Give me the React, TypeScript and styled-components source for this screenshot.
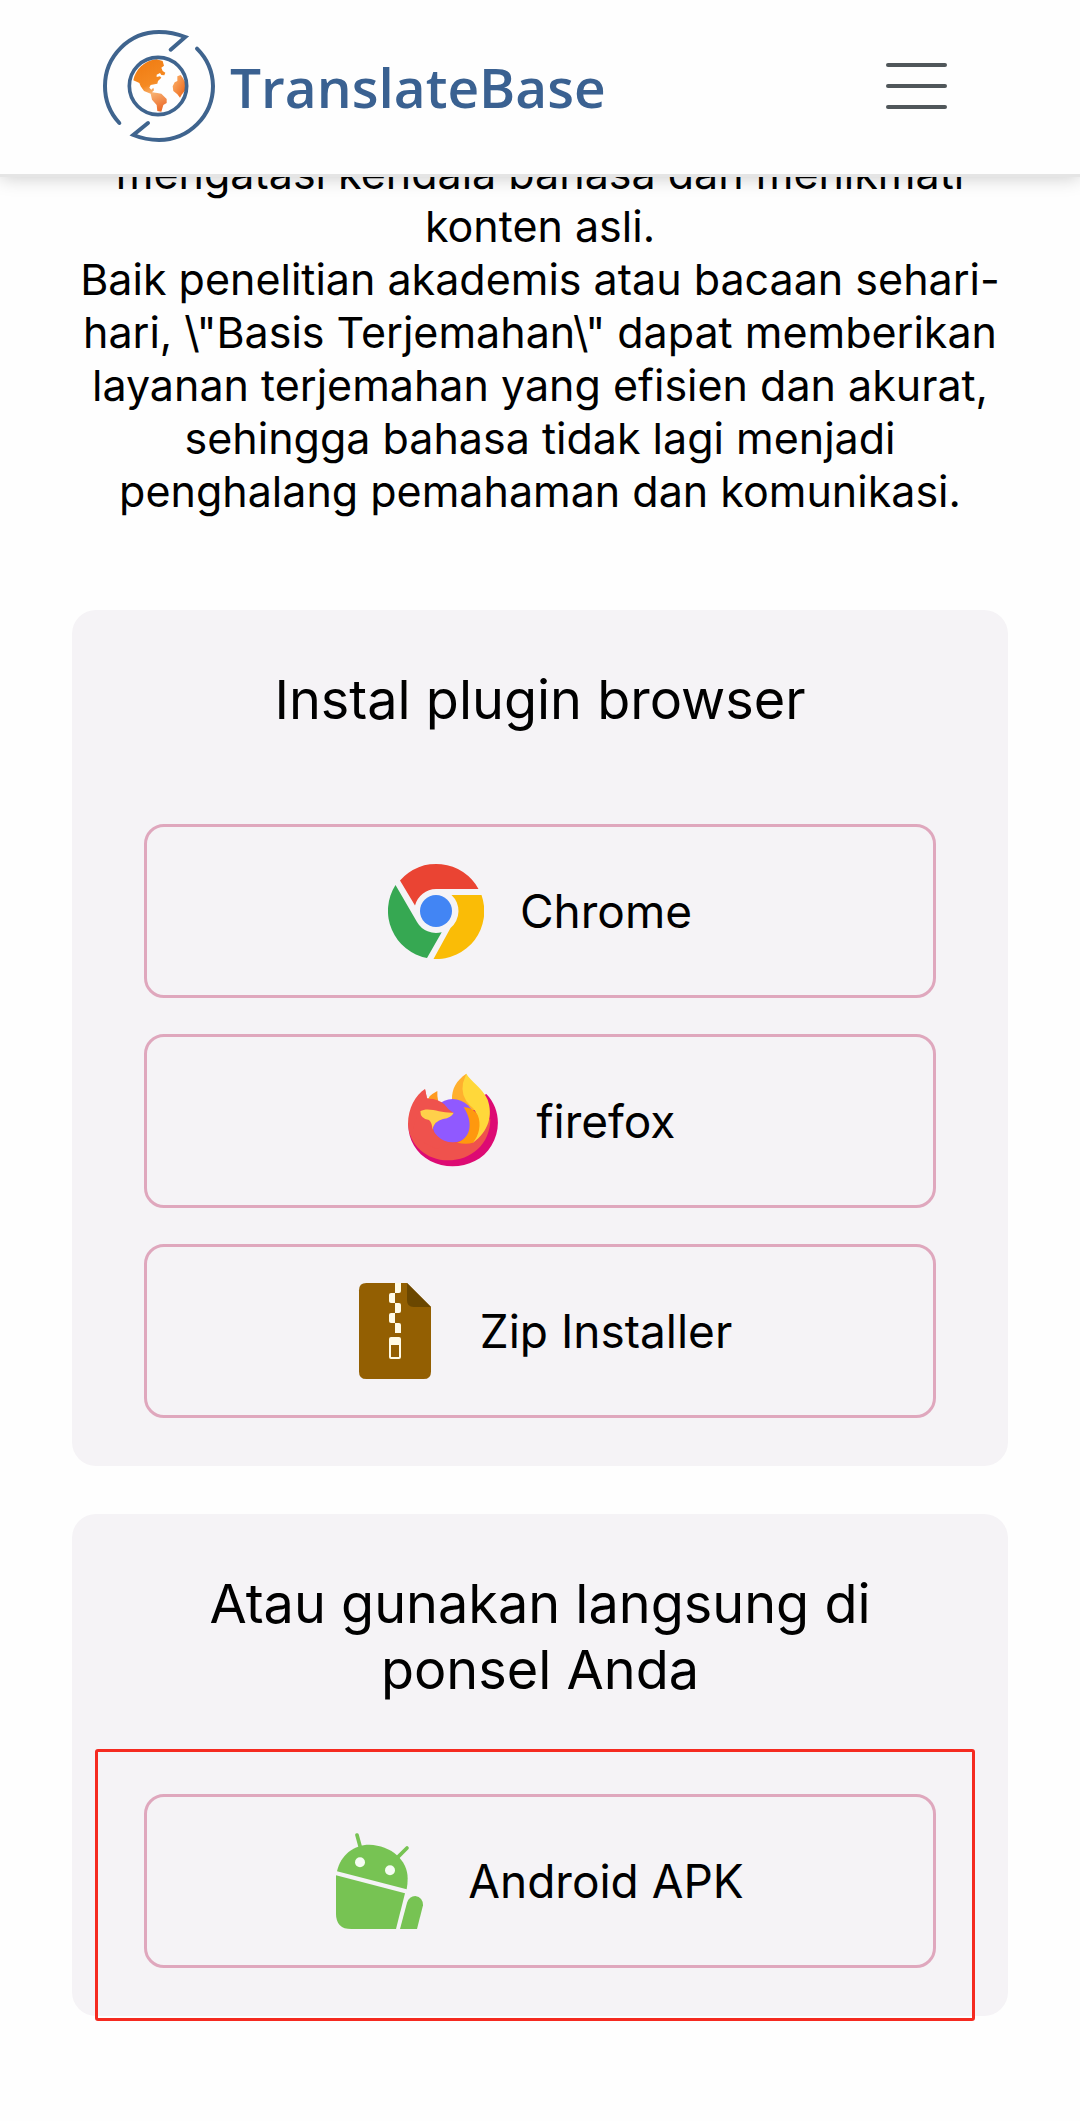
import React from "react";
import styled, { createGlobalStyle } from "styled-components";

const GlobalStyle = createGlobalStyle`
  *, *::before, *::after {
    box-sizing: border-box;
  }
  body {
    margin: 0;
    background: #fefefe;
    color: #000;
    font-family: Inter, "Noto Sans", sans-serif;
  }
`;

const Header = styled.header`
  position: fixed;
  top: 0;
  left: 0;
  right: 0;
  z-index: 10;
  display: flex;
  align-items: center;
  justify-content: space-between;
  height: 177px;
  padding: 0 133px 2px 103px;
  background: #fefefe;
  border-bottom: 3px solid #e5e5e5;
  box-shadow: 0 0 18px rgba(0, 0, 0, 0.22);
`;

const Brand = styled.a`
  display: flex;
  align-items: center;
  gap: 15px;
  color: #3a6191;
  font-family: "Open Sans", "Noto Sans", sans-serif;
  font-size: 55px;
  font-weight: 600;
  line-height: 75px;
  text-decoration: none;
`;

const BrandMark = styled.svg`
  flex: none;
  width: 112px;
  height: 112px;
  overflow: visible;
`;

const MenuButton = styled.button`
  display: flex;
  flex-direction: column;
  gap: 17px;
  padding: 0;
  border: 0;
  background: none;
  cursor: pointer;
`;

const MenuBar = styled.span`
  width: 61px;
  height: 4px;
  border-radius: 2px;
  background: #50575a;
`;

const Main = styled.main`
  padding: 147px 72px 104px;
`;

const Intro = styled.p`
  margin: 0 0 92px;
  font-size: 43px;
  line-height: 53px;
  text-align: center;
`;

const Card = styled.section`
  padding: 57px 72px 48px;
  border-radius: 24px;
  background: #f5f3f6;

  & + & {
    margin-top: 48px;
  }
`;

const CardTitle = styled.h2`
  margin: 0 0 91px;
  font-size: 54px;
  font-weight: 400;
  line-height: 66px;
  text-align: center;
`;

const Downloads = styled.div`
  position: relative;
  display: grid;
  gap: 36px;
`;

const DownloadLink = styled.a`
  display: flex;
  align-items: center;
  justify-content: center;
  gap: 36px;
  padding: 36px;
  border: 3px solid #dfa7bd;
  border-radius: 20px;
  color: #000;
  font-size: 46px;
  line-height: 60px;
  text-decoration: none;
`;

const Icon = styled.svg`
  flex: none;
  width: 96px;
  height: 96px;
`;

const Highlight = styled.span`
  position: absolute;
  inset: -45px -39px -53px -49px;
  border: 3px solid #f52a20;
  border-radius: 3px;
  pointer-events: none;
`;

function Logo() {
  return (
    <BrandMark viewBox="15 15 336 336" fill="none" aria-hidden="true">
      <defs>
        <linearGradient id="land" x1="130" y1="105" x2="200" y2="260" gradientUnits="userSpaceOnUse">
          <stop offset="0" stopColor="#f07c12" />
          <stop offset="0.45" stopColor="#f58a22" />
          <stop offset="0.62" stopColor="#f7b070" />
          <stop offset="1" stopColor="#ea5f1e" />
        </linearGradient>
        <linearGradient id="landEast" x1="225" y1="180" x2="262" y2="200" gradientUnits="userSpaceOnUse">
          <stop offset="0" stopColor="#f9a45c" />
          <stop offset="1" stopColor="#ee6c20" />
        </linearGradient>
      </defs>
      <g stroke="#3f648e" strokeWidth="12" strokeLinecap="round">
        <path d="M64 294A162 162 0 0 1 21 183A162 162 0 0 1 183 21Q224 21 262 36L218 74" />
        <path d="M297 71A162 162 0 0 1 345 183A162 162 0 0 1 183 345Q143 345 106 330L150 294" />
      </g>
      <path
        fill="url(#land)"
        d="M106 166C112 134 138 107 176 103L194 108L198 122L190 128L194 138L202 143L199 151L190 150L186 144L176 149L176 156L186 154L190 158L180 168L178 176L158 180L154 188L160 194L166 188L168 196L162 202L178 204L190 206L206 222L206 234L196 240L190 260L178 258L176 240L162 224L158 206L138 198L128 184L124 174Z"
      />
      <path fill="url(#landEast)" d="M238 154L248 150L254 158L262 172V196L252 208L246 218L238 208L226 198L224 184L230 172L238 168Z" />
      <circle cx="180" cy="183" r="86" stroke="#3f648e" strokeWidth="11" />
    </BrandMark>
  );
}

function ChromeIcon() {
  return (
    <Icon viewBox="0 0 96 96" aria-hidden="true">
      <path fill="#ea4433" d="M12 17.5A48 48 0 0 1 90.5 26H48A22 22 0 0 0 27 42.5Z" />
      <path fill="#fabc06" d="M63.5 32H93.5A48 48 0 0 1 45.5 96L62.5 65A22 22 0 0 0 63.5 32Z" />
      <path fill="#36a852" d="M7.5 22A48 48 0 0 0 39 95L53.7 69.3A22 22 0 0 1 29 59Z" />
      <circle cx="48" cy="48" r="16" fill="#4285f4" />
    </Icon>
  );
}

function FirefoxIcon() {
  return (
    <Icon viewBox="6 12 288 288" aria-hidden="true">
      <path fill="#dd0a73" d="M250 75C290 115 296 180 265 230C230 290 145 308 82 276C38 252 15 210 16 165L140 130Z" />
      <path fill="#ef524d" d="M66 60C38 78 15 118 15 165C18 228 70 274 135 274C205 274 262 225 262 150L150 190L150 132L100 93Q85 88 72 88Z" />
      <path fill="#ff9a1f" d="M80 82Q88 74 103 66Q102 82 106 100L76 90Z" />
      <path fill="#ffb02e" d="M190 14C160 34 146 60 147 92L190 130L226 120L200 60Z" />
      <circle cx="149" cy="155" r="65" fill="#9059ff" />
      <path fill="#ef524d" d="M66 60L72 89Q106 88 124 106Q134 122 152 132Q138 146 118 150Q94 156 90 178Q96 222 150 222L100 240L24 200Z" />
      <path fill="#ffd83a" d="M190 14C202 36 240 58 254 92C270 138 258 186 210 221L226 160Q222 122 202 110Q172 82 180 42Z" />
      <path fill="#ff980e" d="M182 115Q208 114 224 138C236 166 228 200 210 221Q190 227 162 221C204 208 212 160 182 115Z" />
      <path fill="#ffd04a" d="M52 127C66 118 88 122 108 127Q130 132 152 131Q146 146 120 150Q94 156 88 182Q88 162 78 153Q52 150 52 127Z" />
    </Icon>
  );
}

function ZipIcon() {
  return (
    <Icon viewBox="24 69 288 288" aria-hidden="true">
      <path fill="#935f02" d="M79 69H201L273 141V335Q273 357 251 357H79Q57 357 57 335V91Q57 69 79 69Z" />
      <path fill="#6b4700" d="M201 69L273 141H221Q201 141 201 121Z" />
      <g fill="#fffbe6">
        <path d="M165 69H183V93Q183 99 177 99H165Z" />
        <path d="M165 99V129H153Q147 129 147 123V105Q147 99 153 99Z" />
        <path d="M165 129H177Q183 129 183 135V153Q183 159 177 159H165Z" />
        <path d="M165 159V189H153Q147 189 147 183V165Q147 159 153 159Z" />
        <path d="M165 189H177Q183 189 183 195V219H165Z" />
        <path fillRule="evenodd" d="M153 231H177Q183 231 183 237V291Q183 297 177 297H153Q147 297 147 291V237Q147 231 153 231ZM153 255V291H177V255Z" />
      </g>
    </Icon>
  );
}

function AndroidIcon() {
  return (
    <Icon viewBox="75 69 288 288" aria-hidden="true">
      <g fill="#77c353">
        <path d="M78 184C88 136 128 104 175 104C240 106 290 150 290 205Q290 224 287 238Z" />
        <path d="M75 196L282 250L255 357H121Q75 357 75 311Z" />
        <path d="M267 357L288 278Q295 258 313 258Q336 262 336 286L318 357Z" />
      </g>
      <g stroke="#77c353" strokeWidth="11" strokeLinecap="round">
        <path d="M138 75L148 112" />
        <path d="M288 114L262 140" />
      </g>
      <circle cx="147" cy="157" r="15" fill="#f5fdf2" />
      <circle cx="237" cy="181" r="15" fill="#f5fdf2" />
    </Icon>
  );
}

export default function App() {
  return (
    <>
      <GlobalStyle />
      <Header>
        <Brand href="#">
          <Logo />
          TranslateBase
        </Brand>
        <MenuButton type="button" aria-label="Menu">
          <MenuBar />
          <MenuBar />
          <MenuBar />
        </MenuButton>
      </Header>
      <Main>
        <Intro>
          mengatasi kendala bahasa dan menikmati konten asli.
          <br />
          {'Baik penelitian akademis atau bacaan sehari-hari, \\"Basis Terjemahan\\" dapat memberikan layanan terjemahan yang efisien dan akurat, sehingga bahasa tidak lagi menjadi penghalang pemahaman dan komunikasi.'}
        </Intro>
        <Card>
          <CardTitle>Instal plugin browser</CardTitle>
          <Downloads>
            <DownloadLink href="#chrome">
              <ChromeIcon />
              Chrome
            </DownloadLink>
            <DownloadLink href="#firefox">
              <FirefoxIcon />
              firefox
            </DownloadLink>
            <DownloadLink href="#zip">
              <ZipIcon />
              Zip Installer
            </DownloadLink>
          </Downloads>
        </Card>
        <Card>
          <CardTitle>Atau gunakan langsung di ponsel Anda</CardTitle>
          <Downloads>
            <DownloadLink href="#android">
              <AndroidIcon />
              Android APK
            </DownloadLink>
            <Highlight />
          </Downloads>
        </Card>
      </Main>
    </>
  );
}
